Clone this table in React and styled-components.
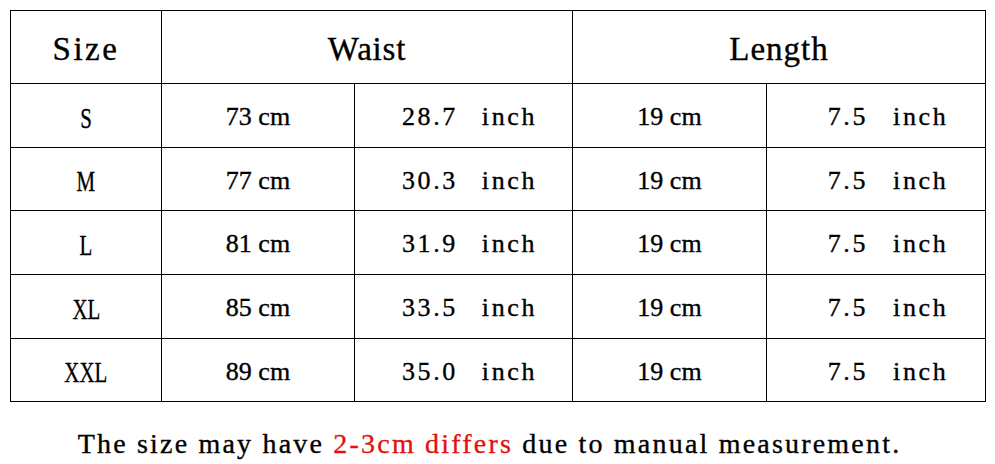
import React from 'react';
import styled, { createGlobalStyle } from 'styled-components';

const GlobalStyle = createGlobalStyle`
  html, body {
    margin: 0;
    padding: 0;
    background: #ffffff;
  }
`;

const Page = styled.div`
  width: 995px;
  height: 464px;
  box-sizing: border-box;
  padding: 10px 0 0 10px;
  background: #fff;
  color: #000;
  font-family: "Liberation Serif", "Times New Roman", serif;
  -webkit-text-stroke: 0.35px #000;
`;

const Grid = styled.div`
  display: grid;
  grid-template-columns: 151px 193px 218px 194px 219px;
  grid-template-rows: 73px 64px 63px 64px 64px 63px;
  width: max-content;
  border-top: 1px solid #000;
  border-left: 1px solid #000;
`;

const Cell = styled.div`
  grid-column: span ${(p) => p.span || 1};
  display: flex;
  align-items: center;
  justify-content: center;
  padding-left: ${(p) => p.shift || 0}px;
  border-right: 1px solid #000;
  border-bottom: 1px solid #000;
  white-space: pre;
`;

const Head = styled.span`
  font-size: 33px;
  letter-spacing: ${(p) => p.spacing || 1}px;
  padding-top: 4px;
`;

const SizeLabel = styled.span`
  display: inline-block;
  font-size: 29px;
  transform: scaleX(0.72);
  padding-top: 5px;
`;

const Metric = styled.span`
  font-size: 26px;
  padding-top: 3px;
`;

const Imperial = styled.span`
  display: flex;
  gap: ${(p) => p.gap}px;
  font-size: 26px;
  letter-spacing: 2.6px;
  padding-top: 3px;
`;

const Note = styled.p`
  margin: 0;
  padding: 26px 16px 0 0;
  width: 975px;
  box-sizing: border-box;
  text-align: center;
  font-size: 28px;
  letter-spacing: 2.2px;
  white-space: pre;
`;

const Red = styled.span`
  color: #e0120f;
  -webkit-text-stroke: 0.35px #e0120f;
`;

const rows = [
  ['S', '73', '28.7'],
  ['M', '77', '30.3'],
  ['L', '81', '31.9'],
  ['XL', '85', '33.5'],
  ['XXL', '89', '35.0'],
];

export default function App() {
  return (
    <Page>
      <GlobalStyle />
      <Grid>
        <Cell><Head spacing={2.5}>Size</Head></Cell>
        <Cell span={2}><Head spacing={0.8}>Waist</Head></Cell>
        <Cell span={2}><Head spacing={1}>Length</Head></Cell>
        {rows.map(([size, cm, inch]) => (
          <React.Fragment key={size}>
            <Cell><SizeLabel>{size}</SizeLabel></Cell>
            <Cell><Metric>{cm} cm</Metric></Cell>
            <Cell shift={12}>
              <Imperial gap={24}><span>{inch}</span><span>inch</span></Imperial>
            </Cell>
            <Cell><Metric>19 cm</Metric></Cell>
            <Cell shift={24}>
              <Imperial gap={25}><span>7.5</span><span>inch</span></Imperial>
            </Cell>
          </React.Fragment>
        ))}
      </Grid>
      <Note>
        The size may have <Red>2-3cm differs</Red> due to manual measurement.
      </Note>
    </Page>
  );
}
